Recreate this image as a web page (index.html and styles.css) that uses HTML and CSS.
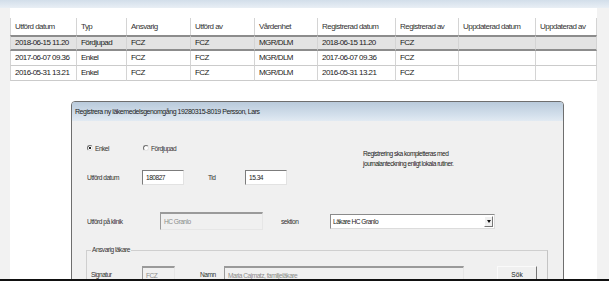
FILE: index.html
```html
<!DOCTYPE html>
<html lang="sv">
<head>
    <meta charset="UTF-8">
    <meta name="viewport" content="width=device-width, initial-scale=1.0">
    <title>Läkemedelsgenomgångar</title>
    <link rel="stylesheet" href="styles.css">
</head>
<body>

<div class="screen">
    <div class="top-strip"></div>

    <div class="workspace">
        <div class="panel">
            <table class="grid">
                <colgroup>
                    <col style="width: 67px">
                    <col style="width: 50px">
                    <col style="width: 64px">
                    <col style="width: 64px">
                    <col style="width: 63px">
                    <col style="width: 78px">
                    <col style="width: 63px">
                    <col style="width: 77px">
                    <col style="width: 61px">
                </colgroup>
                <thead>
                    <tr>
                        <th>Utförd datum</th>
                        <th>Typ</th>
                        <th>Ansvarig</th>
                        <th>Utförd av</th>
                        <th>Vårdenhet</th>
                        <th>Registrerad datum</th>
                        <th>Registrerad av</th>
                        <th>Uppdaterad datum</th>
                        <th>Uppdaterad av</th>
                    </tr>
                </thead>
                <tbody>
                    <tr class="selected">
                        <td>2018-06-15 11.20</td>
                        <td>Fördjupad</td>
                        <td>FCZ</td>
                        <td>FCZ</td>
                        <td>MGR/DLM</td>
                        <td>2018-06-15 11.20</td>
                        <td>FCZ</td>
                        <td></td>
                        <td></td>
                    </tr>
                    <tr>
                        <td>2017-06-07 09.36</td>
                        <td>Enkel</td>
                        <td>FCZ</td>
                        <td>FCZ</td>
                        <td>MGR/DLM</td>
                        <td>2017-06-07 09.36</td>
                        <td>FCZ</td>
                        <td></td>
                        <td></td>
                    </tr>
                    <tr>
                        <td>2016-05-31 13.21</td>
                        <td>Enkel</td>
                        <td>FCZ</td>
                        <td>FCZ</td>
                        <td>MGR/DLM</td>
                        <td>2016-05-31 13.21</td>
                        <td>FCZ</td>
                        <td></td>
                        <td></td>
                    </tr>
                </tbody>
            </table>

            <div class="dialog">
                <div class="dialog-title">Registrera ny läkemedelsgenomgång 19280315-8019 Persson, Lars</div>
                <div class="dialog-body">
                    <div class="top-section">
                        <div class="top-left">
                            <div class="radios">
                                <label class="radio"><span class="radio-dot checked"></span>Enkel</label>
                                <label class="radio"><span class="radio-dot"></span>Fördjupad</label>
                            </div>
                            <div class="field-row date-row">
                                <span class="lbl lbl-datum">Utförd datum</span>
                                <span class="input input-short">180827</span>
                                <span class="lbl lbl-tid">Tid</span>
                                <span class="input input-short">15.34</span>
                            </div>
                        </div>
                        <p class="note">Registrering ska kompletteras med<br>journalanteckning enligt lokala rutiner.</p>
                    </div>

                    <div class="field-row klinik-row">
                        <span class="lbl lbl-klinik">Utförd på klinik</span>
                        <span class="input disabled input-klinik">HC Granlo</span>
                        <span class="lbl lbl-sektion">sektion</span>
                        <span class="select">
                            <span class="select-value">Läkare HC Granlo</span>
                            <span class="select-arrow"></span>
                        </span>
                    </div>

                    <fieldset class="group">
                        <legend>Ansvarig läkare</legend>
                        <div class="field-row sign-row">
                            <span class="lbl lbl-signatur">Signatur</span>
                            <span class="input disabled input-sign">FCZ</span>
                            <span class="lbl lbl-namn">Namn</span>
                            <span class="input disabled input-namn">Maria Cajmatz, familjeläkare</span>
                            <button class="btn">Sök</button>
                        </div>
                    </fieldset>
                </div>
            </div>
        </div>
        <div class="side-strip"></div>
    </div>

    <div class="bottom-line"></div>
</div>

</body>
</html>
```

FILE: styles.css
```css
body {
    margin: 0;
    background: #f2f2f2;
    font-family: "Liberation Sans", Arial, sans-serif;
    color: #222;
}
.screen {
    width: 609px;
    height: 281px;
    display: flex;
    flex-direction: column;
    overflow: hidden;
}
.top-strip {
    height: 8px;
    background: linear-gradient(#d2deea, #e9eff5);
}
.workspace {
    flex: 1;
    display: flex;
    min-height: 0;
}
.panel {
    width: 587px;
    margin-left: 10px;
    padding-top: 10px;
    background: #fff;
    overflow: hidden;
}
.side-strip {
    flex: 1;
    background: #f2f2f2;
}
.bottom-line {
    height: 2px;
    background: #111;
}

/* Result grid */
.grid {
    width: 587px;
    table-layout: fixed;
    border-collapse: separate;
    border-spacing: 0;
    font-size: 8px;
    letter-spacing: -0.55px;
}
.grid th,
.grid td {
    padding: 0 0 0 4px;
    text-align: left;
    font-weight: normal;
    white-space: nowrap;
    overflow: hidden;
    border-right: 1px solid #d4d4d4;
}
.grid th:first-child,
.grid td:first-child {
    border-left: 1px solid #d4d4d4;
}
.grid th {
    line-height: 17px;
    color: #333;
}
.grid td {
    line-height: 14px;
    border-bottom: 1px solid #cbcbcb;
}
.grid tr.selected td {
    background: #e3e3e3;
    line-height: 12px;
    border-top: 2px solid #8c8c8c;
    border-bottom: 2px solid #8c8c8c;
}

/* Dialog window */
.dialog {
    width: 491px;
    margin: 20px 0 0 61px;
    border: 1px solid #6e6e6e;
    border-radius: 4px 4px 0 0;
    background: #f0f0f0;
    font-size: 6.6px;
    letter-spacing: -0.5px;
    color: #333;
}
.dialog-title {
    height: 19px;
    line-height: 19px;
    padding-left: 3px;
    font-size: 7px;
    letter-spacing: -0.45px;
    color: #222;
    border-radius: 3px 3px 0 0;
    background: linear-gradient(#b9cadb, #d4e0ec 70%, #e2eaf2);
}
.dialog-body {
    padding-left: 15px;
    padding-bottom: 20px;
}
.top-section {
    display: flex;
    padding-top: 21px;
}
.radios {
    display: flex;
    height: 12px;
    align-items: center;
}
.radio {
    width: 56px;
    display: flex;
    align-items: center;
    gap: 2px;
}
.radio-dot {
    width: 4px;
    height: 4px;
    border-radius: 50%;
    border: 1px solid;
    border-color: #6f6f6f #e4e4e4 #e4e4e4 #6f6f6f;
    background: #fff;
}
.radio-dot.checked {
    background: radial-gradient(circle, #222 45%, #fff 55%);
}
.field-row {
    display: flex;
    align-items: center;
}
.date-row {
    margin-top: 16px;
    height: 15px;
}
.input {
    box-sizing: border-box;
    display: flex;
    align-items: center;
    padding-left: 3px;
    background: #fff;
    color: #222;
    border: 1px solid;
    border-color: #7c7c7c #e2e2e2 #e2e2e2 #7c7c7c;
    white-space: nowrap;
    overflow: hidden;
}
.input.disabled {
    background: #f0f0f0;
    color: #8c8c8c;
    border-top-width: 2px;
    border-color: #9a9a9a #e6e6e6 #e6e6e6 #9a9a9a;
}
.input-short {
    width: 42px;
    height: 15px;
}
.lbl-datum { width: 55px; }
.lbl-tid { width: 37px; margin-left: 24px; }
.note {
    margin: 7px 0 0 76px;
    line-height: 10px;
    color: #222;
}
.klinik-row {
    margin-top: 27px;
    height: 18px;
}
.lbl-klinik { width: 73px; }
.input-klinik {
    width: 103px;
    height: 18px;
}
.lbl-sektion { width: 49px; margin-left: 18px; }
.select {
    box-sizing: border-box;
    width: 165px;
    height: 15px;
    display: flex;
    align-items: center;
    justify-content: space-between;
    padding: 0 1px 0 2px;
    background: #fff;
    border: 1px solid;
    border-color: #8a8a8a #dcdcdc #dcdcdc #8a8a8a;
    color: #222;
}
.select-arrow {
    width: 9px;
    height: 11px;
    box-sizing: border-box;
    border: 1px solid;
    border-color: #fff #777 #777 #fff;
    background: #f0f0f0;
    display: flex;
    align-items: center;
    justify-content: center;
}
.select-arrow::after {
    content: "";
    border-left: 2px solid transparent;
    border-right: 2px solid transparent;
    border-top: 3px solid #111;
}
.group {
    margin: 15px 0 0 -1px;
    width: 462px;
    box-sizing: border-box;
    padding: 11px 0 20px 4px;
    border: 1px solid #cfcfcf;
    border-right-color: #c4c4c4;
}
.group legend {
    padding: 0 1px;
    line-height: 10px;
}
.sign-row {
    height: 17px;
}
.lbl-signatur { width: 51px; }
.input-sign { width: 33px; height: 17px; }
.lbl-namn { width: 24px; margin-left: 25px; }
.input-namn { width: 240px; height: 17px; }
.btn {
    margin-left: 33px;
    width: 40px;
    height: 17px;
    padding: 0;
    font: inherit;
    color: #222;
    background: #f0f0f0;
    border: 1px solid;
    border-color: #fafafa #767676 #767676 #fafafa;
}
```
